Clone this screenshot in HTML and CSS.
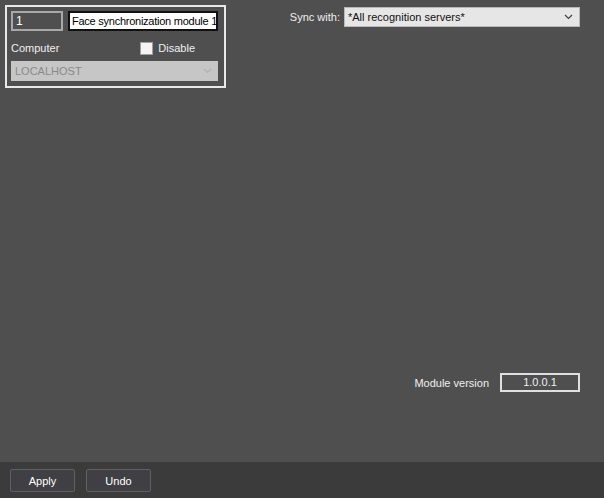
FILE: index.html
```html
<!DOCTYPE html>
<html lang="en">
<head>
    <meta charset="UTF-8">
    <meta name="viewport" content="width=device-width, initial-scale=1.0">
    <title>Face synchronization module</title>
    <link rel="stylesheet" href="styles.css">
</head>
<body>
    <div class="main">
        <div class="top">
            <div class="frame">
                <div class="row">
                    <div class="field num">1</div>
                    <div class="field name">Face synchronization module 1</div>
                </div>
                <div class="row labels">
                    <span class="label">Computer</span>
                    <span class="check"><span class="box"></span>Disable</span>
                </div>
                <div class="select disabled">
                    <span>LOCALHOST</span>
                    <svg class="chev" width="9" height="6" viewBox="0 0 9 6"><path d="M1 1 L4.5 4.5 L8 1" fill="none" stroke="#b0b0b0" stroke-width="1.2"/></svg>
                </div>
            </div>
            <div class="sync">
                <span class="label">Sync with:</span>
                <div class="select light">
                    <span>*All recognition servers*</span>
                    <svg class="chev" width="9" height="6" viewBox="0 0 9 6"><path d="M1 1 L4.5 4.5 L8 1" fill="none" stroke="#404040" stroke-width="1.2"/></svg>
                </div>
            </div>
        </div>
        <div class="version">
            <span class="label">Module version</span>
            <div class="field ver">1.0.0.1</div>
        </div>
    </div>
    <div class="bar">
        <button class="button">Apply</button>
        <button class="button">Undo</button>
    </div>
</body>
</html>
```

FILE: styles.css
```css
body {
    margin: 0;
    background-color: #4f4f4f;
    font-family: "Liberation Sans", Arial, sans-serif;
    font-size: 11px;
    color: #f0f0f0;
}
.main {
    height: 462px;
    box-sizing: border-box;
    padding: 5px 24px 0 5px;
    display: flex;
    flex-direction: column;
}
.top {
    display: flex;
    justify-content: space-between;
}
.frame {
    width: 221px;
    height: 83px;
    box-sizing: border-box;
    border: 2px solid #e8e8e8;
    padding: 4px 5px 0 4px;
}
.row {
    display: flex;
    gap: 5px;
}
.field {
    box-sizing: border-box;
    height: 20px;
    line-height: 16px;
    padding: 0 3px;
    white-space: nowrap;
}
.num {
    width: 52px;
    border: 2px solid #a8a8a8;
    color: #ffffff;
    font-size: 12px;
}
.name {
    width: 150px;
    background: #ffffff;
    border: 2px solid #101010;
    color: #000000;
    padding: 0 2px;
    letter-spacing: -0.25px;
    overflow: hidden;
}
.labels {
    justify-content: space-between;
    align-items: center;
    height: 20px;
    margin-top: 7px;
    padding-right: 24px;
}
.check {
    display: flex;
    align-items: center;
    gap: 5px;
}
.box {
    width: 11px;
    height: 11px;
    background: #f4f4f4;
    border: 1px solid #a0a0a0;
}
.select {
    display: flex;
    justify-content: space-between;
    align-items: center;
    box-sizing: border-box;
    height: 20px;
    padding: 0 6px 0 4px;
}
.disabled {
    width: 207px;
    margin-top: 3px;
    background: #c6c6c6;
    color: #8a8a8a;
}
.sync {
    display: flex;
    align-items: center;
    gap: 4px;
    margin-top: 2px;
    height: 20px;
}
.light {
    width: 236px;
    background: #e6e6e6;
    border: 1px solid #b8b8b8;
    color: #111111;
    padding-left: 3px;
}
.version {
    display: flex;
    align-items: center;
    justify-content: flex-end;
    gap: 11px;
    margin-top: 285px;
}
.ver {
    width: 80px;
    height: 19px;
    border: 2px solid #e0e0e0;
    text-align: center;
    line-height: 15px;
}
.bar {
    height: 36px;
    background: #3b3b3b;
    box-sizing: border-box;
    padding: 7px 10px;
    display: flex;
    gap: 11px;
}
.button {
    width: 65px;
    height: 23px;
    background: #3f3f44;
    border: 1px solid #606064;
    border-radius: 2px;
    color: #ffffff;
    font-family: "Liberation Sans", Arial, sans-serif;
    font-size: 11px;
    padding: 0;
}
```
